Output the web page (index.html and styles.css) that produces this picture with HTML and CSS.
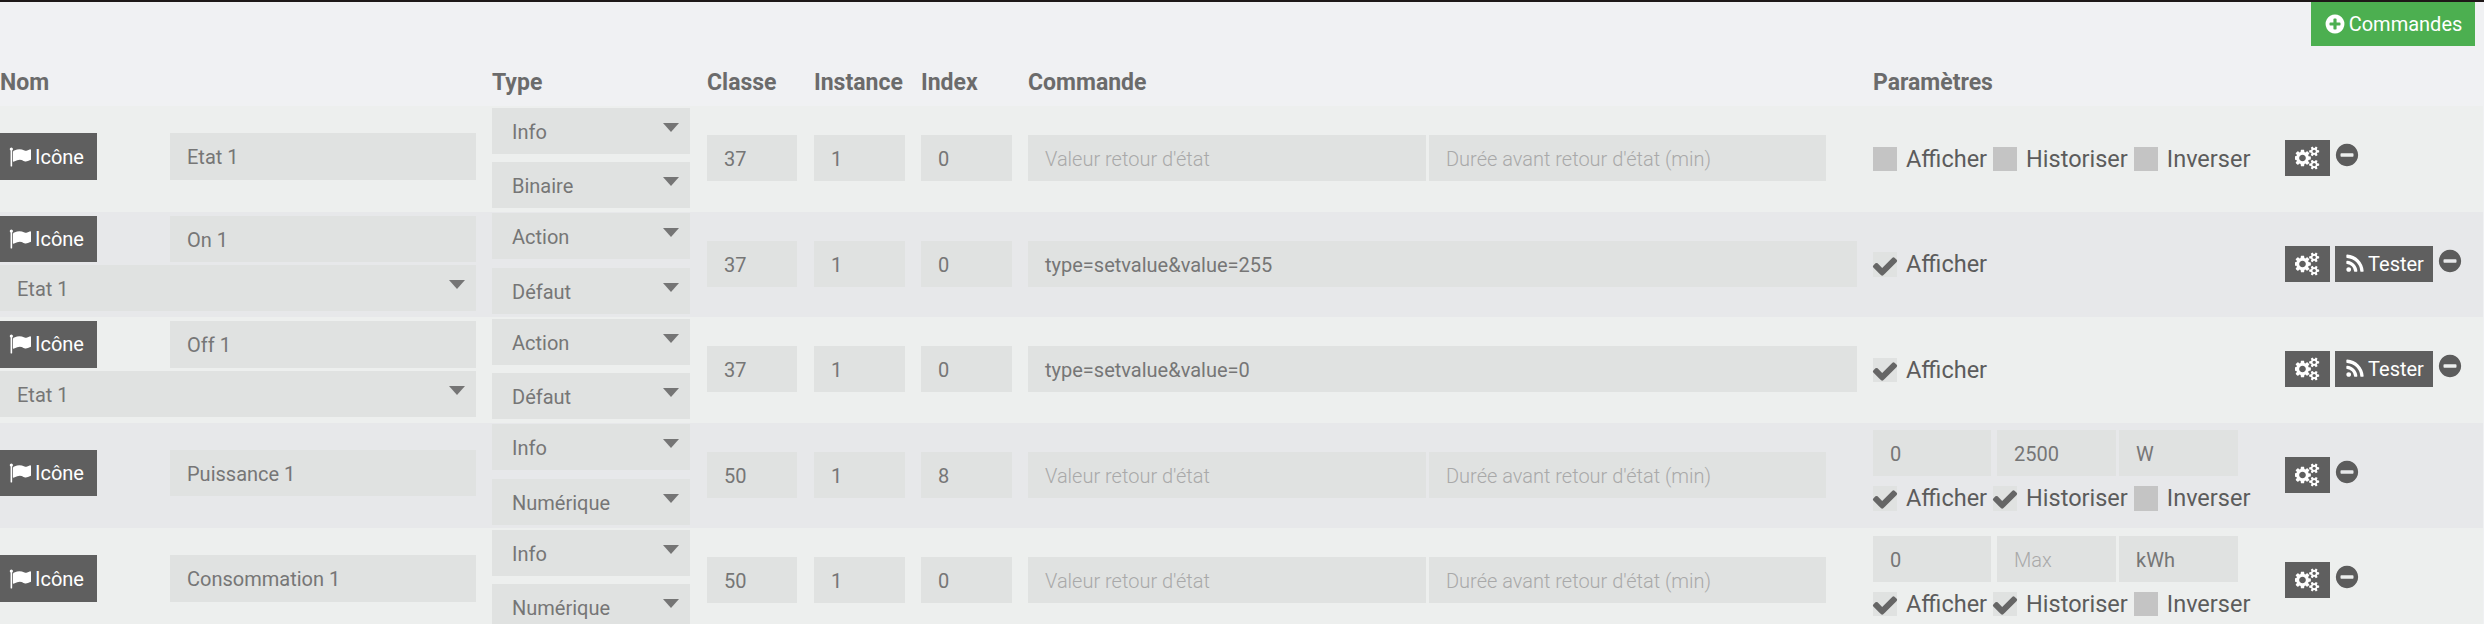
FILE: index.html
```html
<!DOCTYPE html>
<html lang="fr">
<head>
<meta charset="utf-8">
<title>Commandes</title>
<link rel="stylesheet" href="styles.css">
</head>
<body>
<svg class="defs" width="0" height="0" aria-hidden="true">
  <symbol id="i-flag" viewBox="0 0 1792 1792"><path d="M320 256q0 72-64 110v1266q0 13-9.5 22.5t-22.5 9.5h-64q-13 0-22.5-9.5t-9.5-22.5v-1266q-64-38-64-110 0-53 37.5-90.5t90.5-37.5 90.5 37.5 37.5 90.5zm1472 64v763q0 25-12.5 38.5t-39.5 27.5q-215 116-369 116-61 0-123.5-22t-108.5-48-115.5-48-142.5-22q-192 0-464 146-17 9-33 9-26 0-45-19t-19-45v-742q0-32 31-55 21-14 79-43 236-120 421-120 107 0 200 29t219 88q38 19 88 19 54 0 117.5-21t110-47 88-47 54.5-21q26 0 45 19t19 45z"/></symbol>
  <symbol id="i-rss" viewBox="0 0 1792 1792"><path d="M576 1344q0 80-56 136t-136 56-136-56-56-136 56-136 136-56 136 56 56 136zm512 123q2 28-17 48-18 21-47 21h-135q-25 0-43-16.5t-20-41.5q-22-229-184.5-391.5t-391.5-184.5q-25-2-41.5-20t-16.5-43v-135q0-29 21-47 17-17 43-17h5q160 13 306 80.5t259 181.5q114 113 181.5 259t80.5 306zm512 2q2 27-18 47-18 20-46 20h-143q-26 0-44.5-17.5t-19.5-42.5q-12-215-101-408.5t-231.5-336-336-231.5-408.5-102q-25-1-42.5-19.5t-17.5-43.5v-143q0-28 20-46 18-18 44-18h3q262 13 501.5 120t425.5 294q187 186 294 425.5t120 501.5z"/></symbol>
  <symbol id="i-check" viewBox="0 0 1792 1792"><path d="M1671 566q0 40-28 68l-724 724-136 136q-28 28-68 28t-68-28l-136-136-362-362q-28-28-28-68t28-68l136-136q28-28 68-28t68 28l294 295 656-657q28-28 68-28t68 28l136 136q28 28 28 68z"/></symbol>
  <symbol id="i-minus" viewBox="0 0 1792 1792"><path d="M1344 960v-128q0-26-19-45t-45-19h-768q-26 0-45 19t-19 45v128q0 26 19 45t45 19h768q26 0 45-19t19-45zm320-64q0 209-103 385.5t-279.5 279.5-385.5 103-385.5-103-279.5-279.5-103-385.5 103-385.5 279.5-279.5 385.5-103 385.5 103 279.5 279.5 103 385.5z"/></symbol>
  <symbol id="i-plus" viewBox="0 0 1792 1792"><path d="M1344 960v-128q0-26-19-45t-45-19h-256v-256q0-26-19-45t-45-19h-128q-26 0-45 19t-19 45v256h-256q-26 0-45 19t-19 45v128q0 26 19 45t45 19h256v256q0 26 19 45t45 19h128q26 0 45-19t19-45v-256h256q26 0 45-19t19-45zm320-64q0 209-103 385.5t-279.5 279.5-385.5 103-385.5-103-279.5-279.5-103-385.5 103-385.5 279.5-279.5 385.5-103 385.5 103 279.5 279.5 103 385.5z"/></symbol>
  <symbol id="i-cogs" viewBox="0 0 1920 1792"><path d="M832 896q0-106-75-181t-181-75-181 75-75 181 75 181 181 75 181-75 75-181zm768 512q0-52-38-90t-90-38-90 38-38 90q0 53 37.5 90.5t90.5 37.5 90.5-37.5 37.5-90.5zm0-1024q0-52-38-90t-90-38-90 38-38 90q0 53 37.5 90.5t90.5 37.5 90.5-37.5 37.5-90.5zm-384 421v185q0 10-7 19.5t-16 10.5l-155 24q-11 35-32 76 34 48 90 115 7 11 7 20 0 12-7 19-23 30-82.5 89.5t-78.5 59.5q-11 0-21-7l-115-90q-37 19-77 31-11 108-23 155-7 24-30 24h-186q-11 0-20-7.5t-10-17.5l-23-153q-34-10-75-31l-118 89q-7 7-20 7-11 0-21-8-144-133-144-160 0-9 7-19 10-14 41-53t47-61q-23-44-35-82l-152-24q-10-1-17-9.5t-7-19.5v-185q0-10 7-19.5t16-10.5l155-24q11-35 32-76-34-48-90-115-7-11-7-20 0-12 7-20 22-30 82-89t79-59q11 0 21 7l115 90q34-18 77-32 11-108 23-154 7-24 30-24h186q11 0 20 7.5t10 17.5l23 153q34 10 75 31l118-89q8-7 20-7 11 0 21 8 144 133 144 160 0 8-7 19-12 16-42 54t-45 60q23 48 34 82l152 23q10 2 17 10.5t7 19.5zm640 533v140q0 16-149 31-12 27-30 52 51 113 51 138 0 4-4 7-122 71-124 71-8 0-46-47t-52-68q-20 2-30 2t-30-2q-14 21-52 68t-46 47q-2 0-124-71-4-3-4-7 0-25 51-138-18-25-30-52-149-15-149-31v-140q0-16 149-31 13-29 30-52-51-113-51-138 0-4 4-7 4-2 35-20t59-34 30-16q8 0 46 46.5t52 67.5q20-2 30-2t30 2q51-71 92-112l6-2q4 0 124 70 4 3 4 7 0 25-51 138 17 23 30 52 149 15 149 31zm0-1024v140q0 16-149 31-12 27-30 52 51 113 51 138 0 4-4 7-122 71-124 71-8 0-46-47t-52-68q-20 2-30 2t-30-2q-14 21-52 68t-46 47q-2 0-124-71-4-3-4-7 0-25 51-138-18-25-30-52-149-15-149-31v-140q0-16 149-31 13-29 30-52-51-113-51-138 0-4 4-7 4-2 35-20t59-34 30-16q8 0 46 46.5t52 67.5q20-2 30-2t30 2q51-71 92-112l6-2q4 0 124 70 4 3 4 7 0 25-51 138 17 23 30 52 149 15 149 31z"/></symbol>
</svg>

<div class="toolbar">
  <button class="btn btn-add"><svg class="ico ico-plus"><use href="#i-plus"/></svg>Commandes</button>
</div>

<div class="table">
  <div class="row head">
    <div>Nom</div><div>Type</div><div>Classe</div><div>Instance</div><div>Index</div><div>Commande</div><div>Paramètres</div><div></div>
  </div>

  <div class="row odd">
    <div class="name single">
      <button class="btn btn-icon"><svg class="ico ico-flag"><use href="#i-flag"/></svg>Icône</button>
      <div class="field">Etat 1</div>
    </div>
    <div class="type"><div class="field select">Info</div><div class="field select">Binaire</div></div>
    <div class="field">37</div><div class="field">1</div><div class="field">0</div>
    <div class="cmd"><div class="field ph">Valeur retour d'état</div><div class="field ph">Durée avant retour d'état (min)</div></div>
    <div class="params">
      <div class="checks">
        <span class="box"></span><span class="lbl">Afficher</span>
        <span class="box"></span><span class="lbl">Historiser</span>
        <span class="box"></span><span class="lbl">Inverser</span>
      </div>
    </div>
    <div class="actions">
      <button class="btn btn-gear"><svg class="ico ico-cogs"><use href="#i-cogs"/></svg></button>
      <svg class="ico ico-minus"><use href="#i-minus"/></svg>
    </div>
  </div>

  <div class="row even">
    <div class="name">
      <button class="btn btn-icon"><svg class="ico ico-flag"><use href="#i-flag"/></svg>Icône</button>
      <div class="field">On 1</div>
      <div class="field select wide">Etat 1</div>
    </div>
    <div class="type"><div class="field select">Action</div><div class="field select">Défaut</div></div>
    <div class="field">37</div><div class="field">1</div><div class="field">0</div>
    <div class="cmd"><div class="field">type=setvalue&amp;value=255</div></div>
    <div class="params">
      <div class="checks">
        <span class="box on"><svg class="ico ico-check"><use href="#i-check"/></svg></span><span class="lbl">Afficher</span>
      </div>
    </div>
    <div class="actions">
      <button class="btn btn-gear"><svg class="ico ico-cogs"><use href="#i-cogs"/></svg></button>
      <button class="btn btn-test"><svg class="ico ico-rss"><use href="#i-rss"/></svg>Tester</button>
      <svg class="ico ico-minus"><use href="#i-minus"/></svg>
    </div>
  </div>

  <div class="row odd">
    <div class="name">
      <button class="btn btn-icon"><svg class="ico ico-flag"><use href="#i-flag"/></svg>Icône</button>
      <div class="field">Off 1</div>
      <div class="field select wide">Etat 1</div>
    </div>
    <div class="type"><div class="field select">Action</div><div class="field select">Défaut</div></div>
    <div class="field">37</div><div class="field">1</div><div class="field">0</div>
    <div class="cmd"><div class="field">type=setvalue&amp;value=0</div></div>
    <div class="params">
      <div class="checks">
        <span class="box on"><svg class="ico ico-check"><use href="#i-check"/></svg></span><span class="lbl">Afficher</span>
      </div>
    </div>
    <div class="actions">
      <button class="btn btn-gear"><svg class="ico ico-cogs"><use href="#i-cogs"/></svg></button>
      <button class="btn btn-test"><svg class="ico ico-rss"><use href="#i-rss"/></svg>Tester</button>
      <svg class="ico ico-minus"><use href="#i-minus"/></svg>
    </div>
  </div>

  <div class="row even">
    <div class="name single">
      <button class="btn btn-icon"><svg class="ico ico-flag"><use href="#i-flag"/></svg>Icône</button>
      <div class="field">Puissance 1</div>
    </div>
    <div class="type"><div class="field select">Info</div><div class="field select">Numérique</div></div>
    <div class="field">50</div><div class="field">1</div><div class="field">8</div>
    <div class="cmd"><div class="field ph">Valeur retour d'état</div><div class="field ph">Durée avant retour d'état (min)</div></div>
    <div class="params stacked">
      <div class="limits"><div class="field">0</div><div class="field">2500</div><div class="field">W</div></div>
      <div class="checks">
        <span class="box on"><svg class="ico ico-check"><use href="#i-check"/></svg></span><span class="lbl">Afficher</span>
        <span class="box on"><svg class="ico ico-check"><use href="#i-check"/></svg></span><span class="lbl">Historiser</span>
        <span class="box"></span><span class="lbl">Inverser</span>
      </div>
    </div>
    <div class="actions">
      <button class="btn btn-gear"><svg class="ico ico-cogs"><use href="#i-cogs"/></svg></button>
      <svg class="ico ico-minus"><use href="#i-minus"/></svg>
    </div>
  </div>

  <div class="row odd">
    <div class="name single">
      <button class="btn btn-icon"><svg class="ico ico-flag"><use href="#i-flag"/></svg>Icône</button>
      <div class="field">Consommation 1</div>
    </div>
    <div class="type"><div class="field select">Info</div><div class="field select">Numérique</div></div>
    <div class="field">50</div><div class="field">1</div><div class="field">0</div>
    <div class="cmd"><div class="field ph">Valeur retour d'état</div><div class="field ph">Durée avant retour d'état (min)</div></div>
    <div class="params stacked">
      <div class="limits"><div class="field">0</div><div class="field ph">Max</div><div class="field">kWh</div></div>
      <div class="checks">
        <span class="box on"><svg class="ico ico-check"><use href="#i-check"/></svg></span><span class="lbl">Afficher</span>
        <span class="box on"><svg class="ico ico-check"><use href="#i-check"/></svg></span><span class="lbl">Historiser</span>
        <span class="box"></span><span class="lbl">Inverser</span>
      </div>
    </div>
    <div class="actions">
      <button class="btn btn-gear"><svg class="ico ico-cogs"><use href="#i-cogs"/></svg></button>
      <svg class="ico ico-minus"><use href="#i-minus"/></svg>
    </div>
  </div>
</div>
</body>
</html>
```

FILE: styles.css
```css
* { box-sizing: border-box; }

html, body {
  margin: 0;
  height: 100%;
  overflow: hidden;
}

body {
  background: #f0f1f3;
  border-top: 2px solid #1e1818;
  font-family: Roboto, "Liberation Sans", sans-serif;
  font-size: 20px;
  color: #767676;
}

.defs { display: block; height: 0; }

.toolbar {
  display: flex;
  justify-content: flex-end;
  height: 44px;
  padding-right: 9px;
}

.btn {
  display: inline-flex;
  align-items: center;
  justify-content: center;
  border: 0;
  padding: 0;
  margin: 0;
  background: #5f5f5f;
  color: #fff;
  font: inherit;
}

.btn-add {
  width: 164px;
  height: 44px;
  gap: 3px;
  background: #4caf50;
}

.btn-icon {
  height: 46.2px;
  width: 97px;
  gap: 4px;
  justify-content: flex-start;
  padding-left: 9px;
}

.btn-gear { width: 45px; height: 36px; }
.btn-test { width: 98px; height: 36px; gap: 2px; }

.ico { fill: currentColor; flex: none; }
.ico-flag { width: 22px; height: 22px; }
.ico-plus { width: 22px; height: 22px; }
.ico-cogs { width: 25px; height: 24px; }
.ico-rss { width: 22px; height: 22px; }
.ico-minus { width: 26px; height: 26px; margin: 2px 0 0 -1px; color: #5c5c5c; }
.ico-check { width: 28px; height: 28px; color: #666; margin: 2px 0 0 -2px; }

.table { margin-right: 1px; }

.row {
  display: grid;
  grid-template-columns: 492px 215px 107px 107px 107px 845px 412px 1fr;
  align-items: center;
  height: 105.5px;
  padding-bottom: 1.2px;
}

.row > .field { width: 91px; }
.row > .field:nth-child(3) { width: 90px; }

.head {
  height: 60.2px;
  padding-bottom: 10px;
  align-items: end;
  font-size: 23px;
  font-weight: 700;
  color: #6b6b6b;
  line-height: 26px;
  background: transparent;
}

.odd { background: #edefee; }
.even { background: #e7e8ea; }

.field {
  height: 46.2px;
  padding: 0 17px;
  line-height: 48.6px;
  background: #e0e2e1;
  white-space: nowrap;
  overflow: hidden;
}

.name .field,
.type .field { line-height: 49.5px; }

.ph { color: #a9a9a9; font-weight: 300; }

.select { position: relative; padding-left: 20px; }

.select::after {
  content: "";
  position: absolute;
  top: 15px;
  right: 11px;
  border-left: 8px solid transparent;
  border-right: 8px solid transparent;
  border-top: 9px solid #757575;
}

.name {
  display: grid;
  grid-template-columns: 170px 306px;
  row-gap: 3.1px;
  width: 476px;
  align-self: start;
  padding-top: 4.2px;
}

.name.single { padding-top: 27.25px; }

.wide { grid-column: 1 / -1; padding-left: 17px; }

.type {
  display: flex;
  flex-direction: column;
  gap: 8.3px;
  width: 198px;
  align-self: start;
  padding-top: 1.5px;
}

.cmd {
  display: flex;
  gap: 3px;
  width: 829px;
}

.cmd .field { flex: 1 1 0; }
.cmd .ph { flex: 0 0 397px; }
.cmd .ph:first-child { flex-basis: 398px; }

.params { width: 396px; margin-top: 1.6px; }

.stacked {
  align-self: start;
  margin-top: 0;
  padding-top: 7.5px;
  display: flex;
  flex-direction: column;
  gap: 9.8px;
}

.limits { display: flex; gap: 3px; }
.limits .field { width: 119px; }
.limits .field:first-child { width: 118px; margin-right: 3px; }

.checks {
  display: flex;
  align-items: center;
  height: 24.5px;
  line-height: 24.5px;
  font-size: 23.5px;
  color: #5c5c5c;
}

.box {
  display: flex;
  align-items: center;
  width: 24px;
  height: 24.5px;
  background: #c4c4c4;
  margin-right: 9px;
  flex: none;
}

.box.on { background: #e0e2e1; }

.lbl { margin-right: 6px; }

.actions {
  display: flex;
  align-items: flex-start;
  gap: 5px;
}
```
